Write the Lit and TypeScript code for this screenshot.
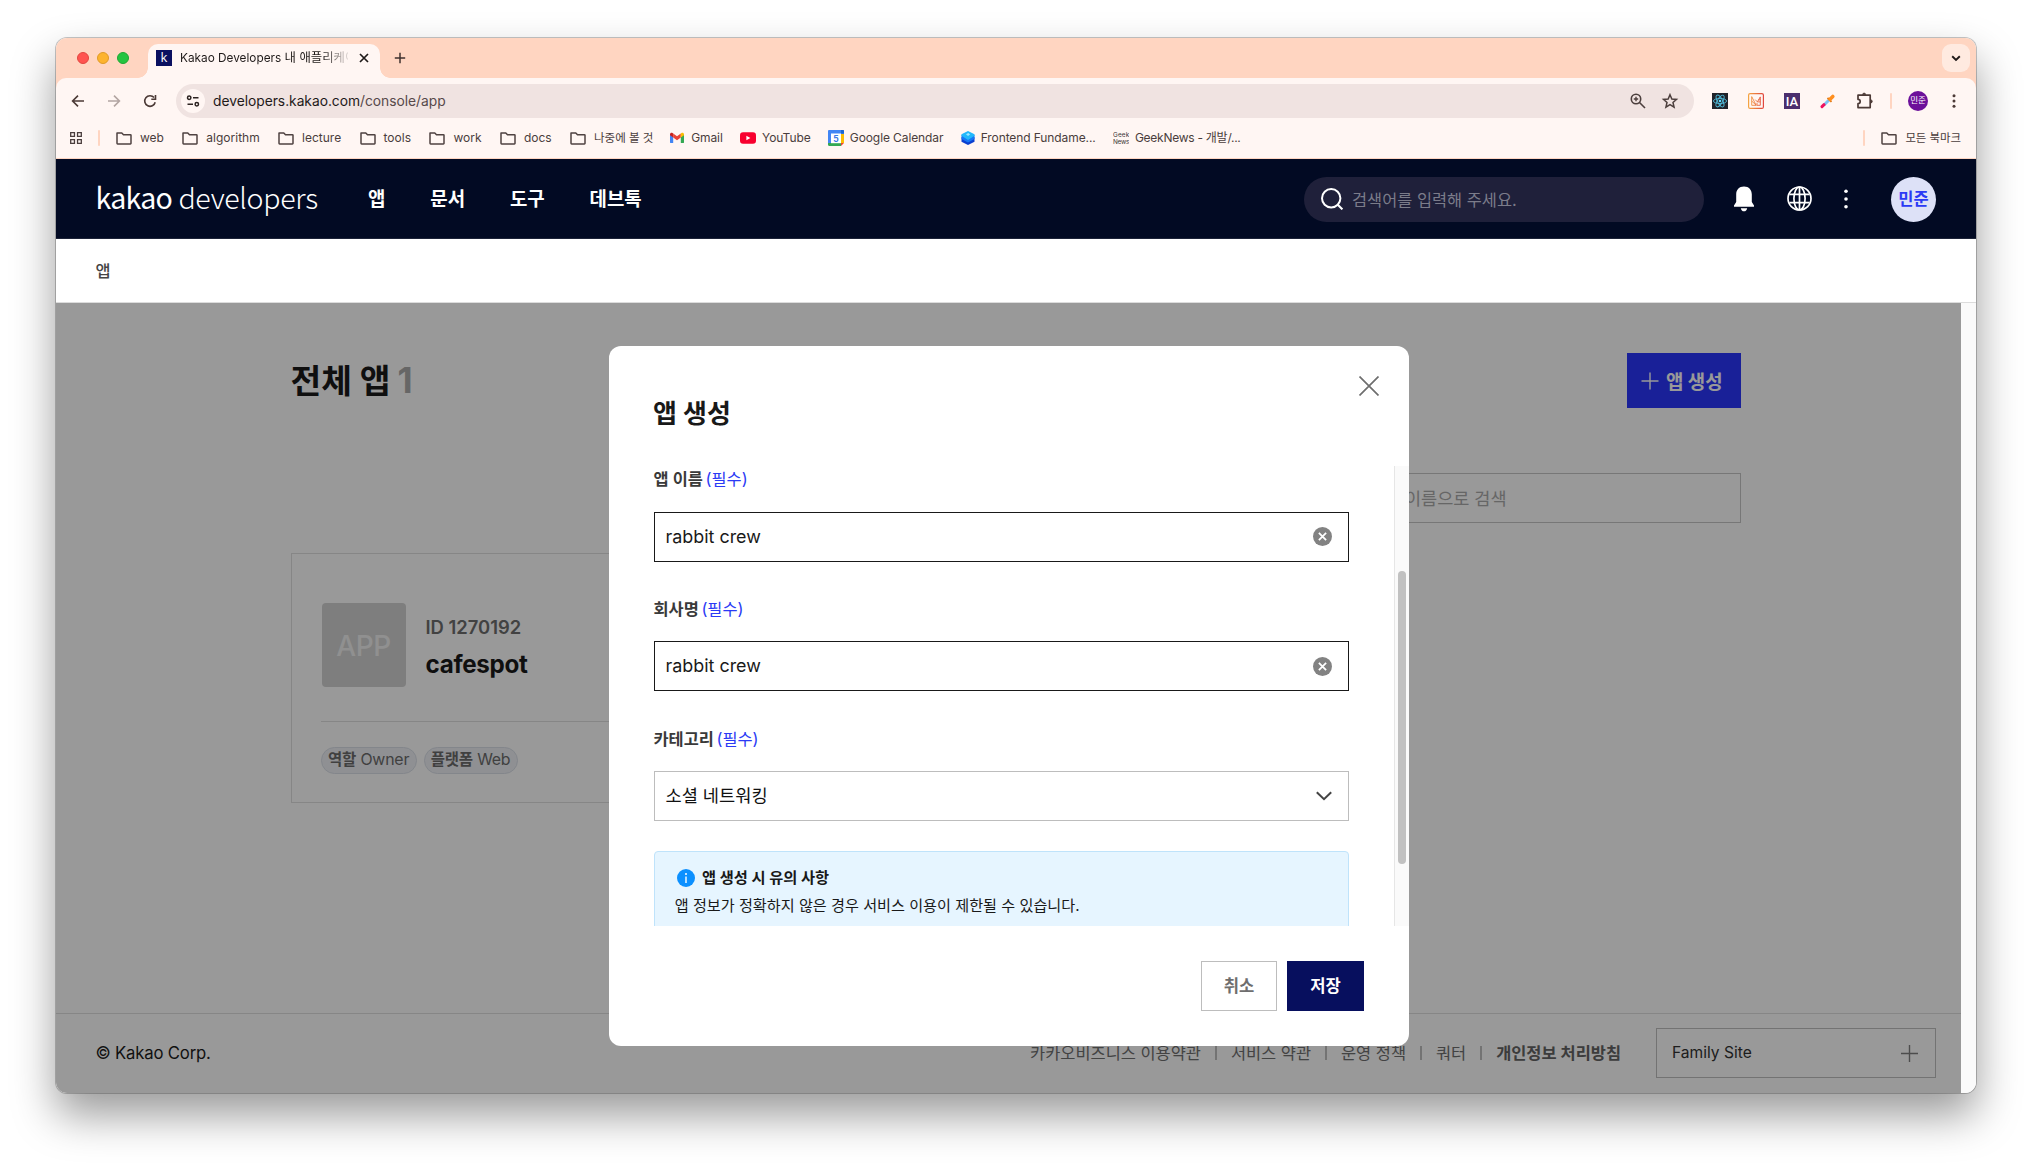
import { LitElement, html, css } from "lit";
import { customElement } from "lit/decorators.js";

const folderIcon = html`<svg class="i16" viewBox="0 0 16 16" fill="none" stroke="#4f4241" stroke-width="1.5" stroke-linejoin="round">
  <path d="M1 2.9h4.8l1.7 1.8H14.4a.6.6 0 0 1 .6.6v8a.6.6 0 0 1-.6.6H1.6a.6.6 0 0 1-.6-.6z"/></svg>`;

const gmailIcon = html`<svg class="i14" viewBox="0 0 14 14">
  <path fill="#4285f4" d="M0 3.2v8c0 .5.4.9.9.9h2.3V6.2z"/>
  <path fill="#34a853" d="M10.800 12.100h2.300c.5 0 .9-.4.9-.9v-8l-3.200 3z"/>
  <path fill="#ea4335" d="M3.200 2.400v4l3.800 2.900 3.800-2.900v-4L7 5.200z"/>
  <path fill="#c5221f" d="M0 3.200v1l3.200 2.400V2.500l-.7-.5C1.500 1.200 0 1.900 0 3.200z"/>
  <path fill="#fbbc04" d="M10.800 2.500v4.100L14 4.200v-1c0-1.300-1.500-2-2.500-1.200z"/></svg>`;

const youtubeIcon = html`<svg class="i16" viewBox="0 0 16 16"><rect x="0" y="2.300" width="16" height="11.400" rx="3" fill="#f8002e"/><path fill="#fff" d="M6.400 5.700v4.600l4-2.300z"/></svg>`;

const calendarIcon = html`<svg class="i16" viewBox="0 0 16 16">
  <path fill="#4285f4" d="M1.200 0h13.600c.7 0 1.200.5 1.200 1.200V4H3v9H0V1.200C0 .5.500 0 1.200 0z"/>
  <path fill="#fbbc04" d="M13 4h3v9h-3z"/><path fill="#34a853" d="M0 13h13v3H1.200C.5 16 0 15.500 0 14.800z"/>
  <path fill="#ea4335" d="M13 13h3l-3 3z"/><path fill="#1967d2" d="M13 0h1.800c.7 0 1.200.5 1.200 1.200V3.500h-3z"/>
  <rect x="3" y="3.500" width="10" height="9.700" fill="#fff"/>
  <text x="8" y="11.500" text-anchor="middle" font-family="Inter, sans-serif" font-weight="700" font-size="8.500" fill="#3b78e7">5</text></svg>`;

const frontendIcon = html`<svg class="i14" viewBox="0 0 14 14">
  <path fill="#0a3fd0" d="M.5 6 7 9l6.500-3v4.700L7 14 .5 10.700z"/>
  <path fill="#1577f5" d="M.5 3.700 7 8l6.500-4.300V8L7 11.500.5 8z"/>
  <path fill="#22b8fb" d="M7 0l6.500 3.300v1.400L7 9 .5 4.700V3.300z"/><path fill="#9be7ff" d="M5 3.200 7.300 2l1.800 1.500L7 5z"/></svg>`;

const geekIcon = html`<svg class="i16" viewBox="0 0 16 16" font-family="Inter, sans-serif" font-size="6.400" fill="#3a3535">
  <text x="0" y="7" textLength="16">Geek</text><text x="0" y="14" textLength="16">News</text></svg>`;

type Mark = { icon: unknown; label: string; ko?: boolean; cls?: string };

const bookmarks: Mark[] = [
  { icon: folderIcon, label: "web" },
  { icon: folderIcon, label: "algorithm" },
  { icon: folderIcon, label: "lecture" },
  { icon: folderIcon, label: "tools" },
  { icon: folderIcon, label: "work" },
  { icon: folderIcon, label: "docs" },
  { icon: folderIcon, label: "나중에 볼 것", ko: true },
  { icon: gmailIcon, label: "Gmail", cls: "site lead" },
  { icon: youtubeIcon, label: "YouTube", cls: "site" },
  { icon: calendarIcon, label: "Google Calendar", cls: "site" },
  { icon: frontendIcon, label: "Frontend Fundame...", cls: "site" },
  { icon: geekIcon, label: "GeekNews - 개발/...", cls: "site tight" },
];

@customElement("browser-chrome")
export class BrowserChrome extends LitElement {
  static styles = css`
    :host { display: block; font-family: Inter, "Noto Sans CJK KR", sans-serif; color: #1f1a19; }
    svg { display: block; flex: none; }
    .i16 { width: 16px; height: 16px; }
    .i14 { width: 14px; height: 14px; }
    .tabs { height: 40px; background: #ffd5c1; display: flex; align-items: flex-end; padding: 0 6px 0 21px; box-sizing: border-box; }
    .lights { display: flex; gap: 8px; height: 40px; align-items: center; margin-right: 19px; }
    .light { width: 12px; height: 12px; border-radius: 50%; box-sizing: border-box; }
    .red { background: #ff5450; border: 1px solid #e2463f; }
    .yellow { background: #fdb32e; border: 1px solid #e09a26; }
    .green { background: #25c440; border: 1px solid #1fa733; }
    .tab { position: relative; width: 232px; height: 34px; background: #fff6f3; border-radius: 10px 10px 0 0; display: flex; align-items: center; padding: 0 9px 6px 8px; box-sizing: border-box; }
    .tab::before, .tab::after { content: ""; position: absolute; bottom: 0; width: 10px; height: 10px; }
    .tab::before { left: -10px; background: radial-gradient(circle at 0 0, transparent 9.500px, #fff6f3 10px); }
    .tab::after { right: -10px; background: radial-gradient(circle at 100% 0, transparent 9.500px, #fff6f3 10px); }
    .fav { width: 16px; height: 16px; background: #0a1060; color: #fff; font: 13px/15px "Open Sans", sans-serif; text-align: center; margin-right: 8px; }
    .title { width: 168px; font-size: 11.800px; line-height: 16px; white-space: nowrap; overflow: hidden; -webkit-mask-image: linear-gradient(90deg, #000 142px, transparent 172px); mask-image: linear-gradient(90deg, #000 142px, transparent 172px); }
    .ko { font-size: 11.500px; }
    .title .ko { font-size: 12.400px; }
    .close { width: 10px; height: 10px; margin-left: 11px; }
    .plus { width: 12px; height: 12px; margin: 0 0 14px 14px; }
    .drop { margin: 0 0 6px auto; width: 28px; height: 28px; border-radius: 9px; background: #ffeae0; display: grid; place-items: center; }
    .body { background: #ffd5c1; }
    .bars { background: #fff6f3; border-radius: 10px 10px 0 0; border-bottom: 1px solid #ffd5c1; }
    .toolbar { height: 46px; display: flex; align-items: center; padding: 0 12px 0 14px; box-sizing: border-box; }
    .toolbar > * { flex: none; }
    .nav { display: flex; gap: 20px; margin-right: 18px; }
    .omni { width: 1518px; height: 34px; border-radius: 17px; background: #f0e3e1; display: flex; align-items: center; padding: 0 14px 0 5px; box-sizing: border-box; }
    .site-info { width: 24px; height: 24px; border-radius: 50%; background: #fff6f3; display: grid; place-items: center; margin-right: 8px; }
    .url { font-size: 13.800px; letter-spacing: -0.02px; flex: 1; margin-top: -1px; }
    .path { color: #57494a; }
    .omni-icons { display: flex; gap: 12px; }
    .exts { display: flex; align-items: center; gap: 20px; margin-left: 18px; }
    .rule { flex: none; width: 2px; height: 16px; background: #ffd5c1; border-radius: 1px; }
    .toolbar .rule { margin-left: 16px; }
    .me { width: 20px; height: 20px; border-radius: 50%; background: #6c109a; color: #fff; font-size: 8.500px; line-height: 19px; text-align: center; margin: 0 16px; }
    .marks { height: 34px; display: flex; align-items: center; padding: 0 15px 7px 14px; box-sizing: border-box; font-size: 12px; color: #4a3d3c; }
    .marks .grid { width: 12px; height: 14px; margin: 0 16px 0 0; }
    .mark { display: flex; align-items: center; gap: 8px; white-space: nowrap; margin-left: 18.400px; line-height: 16px; }
    .mark.site { gap: 6px; margin-left: 17.300px; letter-spacing: -0.1px; }
    .mark.lead { margin-left: 16.800px; gap: 7px; }
    .mark.tight { letter-spacing: -0.26px; }
    .first-rule { margin-right: -2.400px; }
    .end { margin-left: auto; display: flex; align-items: center; }
    .end .mark { margin-left: 16px; }
    .end .ko { font-size: 11.400px; }
  `;

  render() {
    return html`
      <div class="tabs">
        <div class="lights"><i class="light red"></i><i class="light yellow"></i><i class="light green"></i></div>
        <div class="tab">
          <div class="fav">k</div>
          <div class="title">Kakao Developers <span class="ko">내 애플리케이션</span></div>
          <svg class="close" viewBox="0 0 10 10" stroke="#1f1a19" stroke-width="1.700"><path d="M1 1l8 8M9 1l-8 8"/></svg>
        </div>
        <svg class="plus" viewBox="0 0 12 12" stroke="#3f312e" stroke-width="1.500"><path d="M6 .8v10.400M.8 6h10.400"/></svg>
        <div class="drop"><svg width="10" height="10" viewBox="0 0 10 10" fill="none" stroke="#1f1a19" stroke-width="1.900"><path d="M1.200 3.200 5 6.900l3.800-3.700"/></svg></div>
      </div>
      <div class="body"><div class="bars">
        <div class="toolbar">
          <div class="nav">
            <svg class="i16" viewBox="0 0 16 16" fill="none" stroke="#4c3a36" stroke-width="1.600"><path d="M14 8H3M8 2.600 2.600 8 8 13.400"/></svg>
            <svg class="i16" viewBox="0 0 16 16" fill="none" stroke="#b3a5a2" stroke-width="1.600"><path d="M2 8h11M8 2.600 13.400 8 8 13.400"/></svg>
            <svg class="i16" viewBox="0 0 16 16" fill="none" stroke="#4c3a36" stroke-width="1.600"><path d="M13.200 9.200A5.300 5.300 0 1 1 12.100 4.600"/><path d="M13.500 2v4.200H9.300" /></svg>
          </div>
          <div class="omni">
            <div class="site-info"><svg width="14" height="14" viewBox="0 0 14 14" fill="none" stroke="#2c2321" stroke-width="1.500"><circle cx="3.200" cy="3.800" r="1.700"/><path d="M7 3.800h5.500M1.500 10.200H7"/><circle cx="10.800" cy="10.200" r="1.700"/></svg></div>
            <div class="url">developers.kakao.com<span class="path">/console/app</span></div>
            <div class="omni-icons">
              <svg width="20" height="20" viewBox="0 0 20 20" fill="none" stroke="#4c3f3d" stroke-width="1.600"><circle cx="8" cy="8" r="4.700"/><path d="M11.500 11.500 17 17"/><path d="M8 5.800v4.400M5.800 8h4.400" stroke-width="1.400"/></svg>
              <svg width="20" height="20" viewBox="0 0 20 20" fill="none" stroke="#4c3f3d" stroke-width="1.500" stroke-linejoin="miter"><path d="M10 3.700l1.850 4.300 4.650.4-3.500 3.100 1.050 4.600L10 13.650 5.950 16.100 7 11.500 3.500 8.400l4.650-.4z"/></svg>
            </div>
          </div>
          <div class="exts">
            <svg class="i16" viewBox="0 0 16 16"><rect width="16" height="16" fill="#20232a"/><g fill="none" stroke="#4fb9d8" stroke-width=".9"><ellipse cx="8" cy="8" rx="6.600" ry="2.600"/><ellipse cx="8" cy="8" rx="6.600" ry="2.600" transform="rotate(60 8 8)"/><ellipse cx="8" cy="8" rx="6.600" ry="2.600" transform="rotate(120 8 8)"/></g><circle cx="8" cy="8" r="1.300" fill="#61dafb"/></svg>
            <svg class="i16" viewBox="0 0 16 16" fill="none"><defs><linearGradient id="og" gradientUnits="userSpaceOnUse" x1="0" y1="0" x2="16" y2="0"><stop offset="0" stop-color="#f5a742"/><stop offset="1" stop-color="#e0443e"/></linearGradient></defs><g stroke="url(#og)"><rect x=".6" y=".6" width="14.800" height="14.800" rx="1.500" stroke-width="1.200"/><path stroke-width=".9" d="M3.700 3.600v8.700h4.500zM3.700 8l4.500 4.300M7.200 6.600l2.200 2.300 2.900-5v8.400H9V9.800M10.200 6.800h2.100M9.400 8.900h2.900"/></g></svg>
            <svg class="i16" viewBox="0 0 16 16"><rect width="16" height="16" fill="#4b2e6d"/><text x="8" y="12.700" text-anchor="middle" font-family="Roboto, sans-serif" font-weight="500" font-size="13" fill="#fff">IA</text></svg>
            <svg class="i16" viewBox="0 0 16 16"><path d="M3.800 12.200 9 7" stroke="#7cc4f4" stroke-width="3"/><path d="M2 13.600 4 11.700" stroke="#f0135f" stroke-width="3" stroke-linecap="round"/><path d="M7.500 4.800l4 4" stroke="#e3760e" stroke-width="1.800"/><path d="M10 6.200 12.800 3.400" stroke="#ff8f1f" stroke-width="3.600" stroke-linecap="round"/></svg>
            <svg width="18" height="18" viewBox="0 0 18 18" fill="none" stroke="#4c3a36" stroke-width="1.700" stroke-linejoin="round"><path d="M2 3.200H14.200V15.600H2V11.700a2.200 2.200 0 0 0 0-4.400z"/><path d="M6.600 2.600a1.500 1.500 0 0 1 3 0zM14.800 7.900a1.500 1.500 0 0 1 0 3z" fill="#4c3a36" stroke-width=".8"/></svg>
          </div>
          <i class="rule"></i>
          <div class="me">민준</div>
          <svg width="20" height="20" viewBox="0 0 20 20" fill="#4c3a36"><circle cx="10" cy="4.800" r="1.500"/><circle cx="10" cy="10" r="1.500"/><circle cx="10" cy="15.200" r="1.500"/></svg>
        </div>
        <div class="marks">
          <svg class="grid" width="14" height="14" viewBox="0 0 14 14" fill="none" stroke="#4a3d3c" stroke-width="1.500"><path d="M.8.8h4.400v4.400H.8zM8.800.8h4.400v4.400H8.800zM.8 8.800h4.400v4.400H.8zM8.800 8.800h4.400v4.400H8.800z"/></svg>
          <i class="rule first-rule"></i>
          ${bookmarks.map((b) => html`<div class="mark ${b.cls ?? ""}">${b.icon}<span class=${b.ko ? "ko" : ""}>${b.label}</span></div>`)}
          <div class="end"><i class="rule"></i><div class="mark">${folderIcon}<span class="ko">모든 북마크</span></div></div>
        </div>
      </div></div>
    `;
  }
}

@customElement("site-header")
export class SiteHeader extends LitElement {
  static styles = css`
    :host { display: block; font-family: Inter, "Noto Sans CJK KR", sans-serif; }
    svg { display: block; flex: none; }
    .bar { height: 80px; box-sizing: border-box; background: #020a23; border-bottom: 1px solid #1c2338; display: flex; align-items: center; padding: 2px 40px 0 39.500px; color: #fff; }
    .logo { font-family: "Noto Sans CJK KR", sans-serif; font-size: 28.600px; line-height: 40px; width: 272.500px; white-space: nowrap; padding-bottom: 5px; }
    .kakao { font-weight: 400; letter-spacing: -0.800px; }
    .dev { font-weight: 300; letter-spacing: -0.350px; }
    .menu { display: flex; gap: 44.900px; font-size: 18.900px; font-weight: 600; line-height: 26px; padding-top: 1px; }
    .find { margin-left: auto; width: 400px; height: 45px; border-radius: 23px; background: #1f203a; display: flex; align-items: center; padding: 0 16px 0 17px; box-sizing: border-box; gap: 9px; color: #7b7c8a; font-size: 16.400px; }
    .find span { margin-top: -2px; }
    .find svg { margin-top: -2px; }
    .bell { margin-left: 28px; margin-top: -1px; }
    .globe { margin-left: 30.500px; margin-right: 0.500px; margin-top: -2px; }
    .dots { margin-left: 22px; margin-top: -2px; }
    .user { margin-left: 33px; width: 45px; height: 45px; border-radius: 50%; background: #dde1f7; color: #2b3af5; font-weight: 700; font-size: 16.500px; line-height: 45px; text-align: center; }
    .crumb { height: 64px; box-sizing: border-box; background: #fff; border-bottom: 1px solid #dcdcdc; display: flex; align-items: center; padding: 0 39.500px 2px; font-size: 16.400px; font-weight: 500; color: #444; }
  `;

  render() {
    return html`
      <div class="bar">
        <div class="logo"><span class="kakao">kakao</span> <span class="dev">developers</span></div>
        <nav class="menu"><span>앱</span><span>문서</span><span>도구</span><span>데브톡</span></nav>
        <div class="find">
          <svg width="22" height="22" viewBox="0 0 22 22" fill="none" stroke="#fff" stroke-width="2"><circle cx="10.200" cy="10.200" r="9.200"/><path d="M16.800 16.800l4.600 4.600"/></svg>
          <span>검색어를 입력해 주세요.</span>
        </div>
        <svg class="bell" width="24" height="26" viewBox="0 0 24 26" fill="#fff"><path d="M12 .5c5 0 7.800 3.300 7.800 8V16l2.200 3.600v1.200H2v-1.200L4.200 16V8.500c0-4.700 2.800-8 7.800-8zM8.800 22.200h6.400c-.3 1.900-1.600 3.100-3.200 3.100s-2.900-1.200-3.200-3.100z"/></svg>
        <svg class="globe" width="25" height="25" viewBox="0 0 25 25" fill="none" stroke="#fff" stroke-width="1.700"><circle cx="12.500" cy="12.500" r="11.500"/><ellipse cx="12.500" cy="12.500" rx="5.600" ry="11.500"/><path d="M12.500 1v23M2.500 8.300h20M2.500 16.700h20"/></svg>
        <svg class="dots" width="24" height="24" viewBox="0 0 24 24" fill="#fff"><circle cx="12" cy="4.300" r="1.800"/><circle cx="12" cy="12" r="1.800"/><circle cx="12" cy="19.700" r="1.800"/></svg>
        <div class="user">민준</div>
      </div>
      <div class="crumb">앱</div>
    `;
  }
}

@customElement("app-list")
export class AppList extends LitElement {
  static styles = css`
    :host { display: flex; flex-direction: column; height: 790px; background: #fff; font-family: Inter, "Noto Sans CJK KR", sans-serif; }
    .main { height: 710px; box-sizing: border-box; padding: 50px 220px 0 235px; }
    .top { height: 55px; display: flex; justify-content: space-between; align-items: center; }
    h1 { margin: 0 0 1px -0.500px; font-size: 33.400px; font-weight: 700; color: #191919; line-height: 48px; }
    .count { color: #aaa; font-size: 35px; margin-left: -1px; }
    .create { width: 114px; height: 55px; background: #2b36fd; color: #fff; display: flex; align-items: center; padding-left: 14px; box-sizing: border-box; gap: 7px; font-size: 18.900px; font-weight: 700; }
    .create span { margin-top: -1px; }
    svg { display: block; flex: none; }
    .filter { margin: 65px 0 0 auto; width: 370px; height: 50px; box-sizing: border-box; border: 1px solid #c7c7c7; padding: 0 12px 2px; display: flex; align-items: center; color: #aaa; font-size: 17.500px; }
    .cards { margin-top: 30px; display: grid; grid-template-columns: repeat(3, 1fr); gap: 20px; }
    .card { height: 250px; box-sizing: border-box; border: 1px solid #e0e0e0; padding: 49px 29px 0 29px; }
    .info { display: flex; gap: 20px; height: 119px; box-sizing: border-box; border-bottom: 1px solid #e0e0e0; }
    .thumb { width: 84px; height: 84px; border-radius: 4px; background: #d2d2d2; color: #f0f0f0; font-size: 28px; font-weight: 500; line-height: 86px; text-align: center; letter-spacing: -0.500px; margin-left: 0.500px; }
    .names { padding-top: 11.500px; }
    .id { font-size: 18.400px; line-height: 24px; font-weight: 600; color: #6e6e6e; }
    .name { font-size: 24.200px; line-height: 34px; font-weight: 700; color: #191919; margin-top: 9px; letter-spacing: -0.300px; }
    .tags { display: flex; gap: 7px; margin-top: 25px; }
    .tag { height: 27px; box-sizing: border-box; border: 1px solid #dadfe8; background: #eff1f6; border-radius: 14px; padding: 0 6.500px 0 6px; font-size: 15.900px; line-height: 23px; color: #6c6c6c; white-space: nowrap; letter-spacing: -0.2px; }
    .tag b { font-weight: 600; font-size: 15.500px; }
    .foot { height: 80px; box-sizing: border-box; border-top: 1px solid #e0e0e0; display: flex; align-items: center; padding: 0 25px 1px 39.500px; color: #707070; font-size: 16.450px; }
    .copy { font-size: 16.700px; letter-spacing: -0.180px; color: #1c1c1c; margin-right: auto; }
    .links { display: flex; align-items: center; gap: 14.200px; margin-right: 35px; }
    .links span, .links b { margin-top: -2px; }
    .sep { width: 1.500px; height: 14px; background: #c0c0c0; }
    .links b { font-weight: 700; color: #646464; }
    .family { width: 280px; height: 50px; box-sizing: border-box; border: 1px solid #c0c0c0; padding: 0 17px 0 15px; display: flex; justify-content: space-between; align-items: center; color: #333; font-size: 15.600px; }
    .family span { margin-top: -2px; }
  `;

  render() {
    const links = ["카카오비즈니스 이용약관", "서비스 약관", "운영 정책", "쿼터"];
    return html`
      <div class="main">
        <div class="top">
          <h1>전체 앱 <span class="count">1</span></h1>
          <div class="create"><svg width="18" height="18" viewBox="0 0 18 18" stroke="#fff" stroke-width="1.400"><path d="M9 .5v17M.5 9h17"/></svg><span>앱 생성</span></div>
        </div>
        <div class="filter">앱 이름으로 검색</div>
        <div class="cards">
          <div class="card">
            <div class="info">
              <div class="thumb">APP</div>
              <div class="names"><div class="id">ID 1270192</div><div class="name">cafespot</div></div>
            </div>
            <div class="tags"><span class="tag"><b>역할</b> Owner</span><span class="tag"><b>플랫폼</b> Web</span></div>
          </div>
        </div>
      </div>
      <div class="foot">
        <span class="copy">© Kakao Corp.</span>
        <div class="links">${links.map((l) => html`<span>${l}</span><i class="sep"></i>`)}<b>개인정보 처리방침</b></div>
        <div class="family"><span>Family Site</span><svg width="17" height="17" viewBox="0 0 17 17" stroke="#808080" stroke-width="1.400"><path d="M8.500 0v17M0 8.500h17"/></svg></div>
      </div>
    `;
  }
}

@customElement("create-dialog")
export class CreateDialog extends LitElement {
  static styles = css`
    :host { display: flex; flex-direction: column; width: 800px; height: 700px; background: #fff; border-radius: 12px; box-sizing: border-box; overflow: hidden; font-family: Inter, "Noto Sans CJK KR", sans-serif; color: #191919; }
    svg { display: block; flex: none; }
    .head { height: 120px; box-sizing: border-box; display: flex; justify-content: space-between; padding: 30px 30px 0 44px; }
    h2 { margin: 20px 0 0; font-size: 26px; line-height: 36px; font-weight: 700; }
    .scroll { height: 460px; display: flex; overflow: hidden; }
    .form { width: 785px; box-sizing: border-box; padding: 0 45px; }
    .track { width: 15px; box-sizing: border-box; background: #fafafa; border-left: 1px solid #e6e6e6; padding: 105px 3px 0 3px; }
    .thumb { height: 293px; border-radius: 4px; background: #c1c1c1; }
    .field { height: 129px; }
    .field.wide { height: 130px; }
    .label { height: 46px; font-size: 16.400px; font-weight: 600; line-height: 24px; color: #3a3a3a; box-sizing: border-box; padding-top: 1px; margin-left: -0.500px; }
    .wide .label { padding-top: 1.600px; }
    .req { font-weight: 400; color: #2b3af5; margin-left: -1.500px; }
    .box { height: 50px; box-sizing: border-box; border: 1px solid #191919; display: flex; align-items: center; justify-content: space-between; padding: 0 16px 0 10.500px; font-size: 17.900px; }
    .box span { margin-top: -2px; }
    .box svg { margin-top: -1px; }
    .wide .box span { margin-top: -1px; }
    .wide .box svg { margin-top: 0; }
    .wide .select span { margin-top: -3px; }
    .select { border-color: #bdbdbd; font-size: 17.600px; color: #111; padding-right: 16.500px; }
    .note { margin-top: -4px; height: 120px; box-sizing: border-box; border: 1px solid #bfe3fb; border-radius: 4px; background: #e6f5ff; padding: 12px 20px; font-size: 15.150px; line-height: 27.500px; }
    .note-title { display: flex; align-items: center; gap: 7px; font-weight: 700; padding-left: 2px; height: 27.500px; font-size: 15.300px; }
    .note-title span { margin-top: -1px; }
    .note-text { white-space: nowrap; margin-left: -0.300px; }
    .acts { display: flex; justify-content: flex-end; gap: 10px; padding: 35px 45px 0 0; }
    .btn { height: 50px; box-sizing: border-box; font-size: 16.600px; font-weight: 600; line-height: 50px; text-align: center; }
    .cancel { width: 76px; border: 1px solid #bdbdbd; color: #6e6e6e; line-height: 48px; }
    .save { width: 77px; background: #070f5e; color: #fff; font-weight: 700; }
  `;

  private field(label: string, value: string, wide = false) {
    return html`<div class="field ${wide ? "wide" : ""}">
      <div class="label">${label} <span class="req">(필수)</span></div>
      <div class="box"><span>${value}</span>
        <svg width="19" height="19" viewBox="0 0 19 19"><circle cx="9.500" cy="9.500" r="9.500" fill="#828282"/><path d="M5.900 5.900l7.200 7.200M13.100 5.900l-7.200 7.200" stroke="#fff" stroke-width="1.800"/></svg>
      </div>
    </div>`;
  }

  render() {
    return html`
      <div class="head">
        <h2>앱 생성</h2>
        <svg width="20" height="20" viewBox="0 0 20 20" stroke="#6e6e6e" stroke-width="1.700"><path d="M.5.5l19 19M19.500.5l-19 19"/></svg>
      </div>
      <div class="scroll">
        <div class="form">
          ${this.field("앱 이름", "rabbit crew")} ${this.field("회사명", "rabbit crew", true)}
          <div class="field wide">
            <div class="label">카테고리 <span class="req">(필수)</span></div>
            <div class="box select"><span>소셜 네트워킹</span>
              <svg width="16" height="10" viewBox="0 0 16 10" fill="none" stroke="#444" stroke-width="2"><path d="M.8 1.200 8 8.200l7.200-7"/></svg></div>
          </div>
          <div class="note">
            <div class="note-title">
              <svg width="18" height="18" viewBox="0 0 18 18"><circle cx="9" cy="9" r="9" fill="#0c90ff"/><path d="M9 7.500v6.500" stroke="#fff" stroke-width="1.400"/><circle cx="9" cy="4.900" r="1" fill="#fff"/></svg>
              <span>앱 생성 시 유의 사항</span>
            </div>
            <div class="note-text">앱 정보가 정확하지 않은 경우 서비스 이용이 제한될 수 있습니다.</div>
          </div>
        </div>
        <div class="track"><div class="thumb"></div></div>
      </div>
      <div class="acts"><div class="btn cancel">취소</div><div class="btn save">저장</div></div>
    `;
  }
}

@customElement("app-root")
export class AppRoot extends LitElement {
  static styles = css`
    :host { display: block; height: 1167px; box-sizing: border-box; padding: 38px 56px 0; background: #fff; overflow: hidden; }
    .window { width: 1920px; height: 1055px; border-radius: 11px; overflow: hidden; }
    .shade { border-radius: 11px; width: 1920px; height: 1055px; box-shadow: 0 0 0 1px rgba(0, 0, 0, 0.22), 0 22px 44px rgba(0, 0, 0, 0.4); }
    .view { display: flex; position: relative; height: 790px; }
    app-list { width: 1905px; }
    .gutter { flex: 1; background: #fafafa; }
    .dim { position: absolute; inset: 0 15px 0 0; background: rgba(0, 0, 0, 0.4); }
    create-dialog { position: absolute; left: 553px; top: 43px; }
  `;

  render() {
    return html`
      <div class="shade"><div class="window">
        <browser-chrome></browser-chrome>
        <site-header></site-header>
        <div class="view">
          <app-list></app-list>
          <div class="gutter"></div>
          <div class="dim"></div>
          <create-dialog></create-dialog>
        </div>
      </div></div>
    `;
  }
}
